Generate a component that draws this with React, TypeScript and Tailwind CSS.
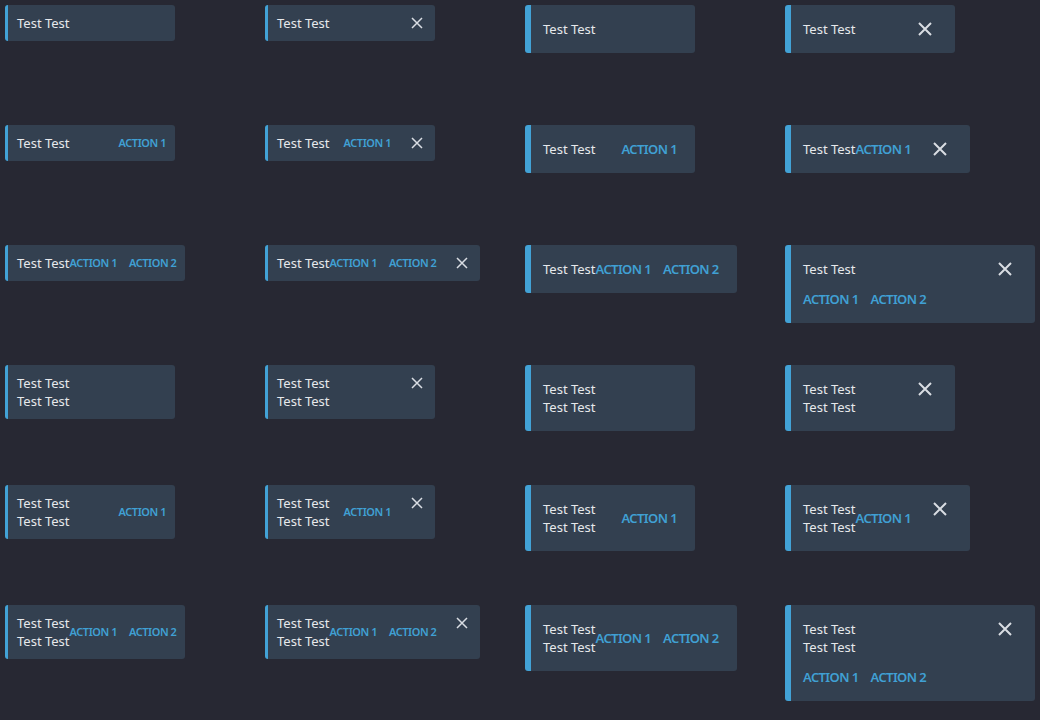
import React from 'react';

type Size = 'sm' | 'lg';

type ToastProps = {
    size: Size;
    lines?: number;
    actions?: number;
    close?: boolean;
    stacked?: boolean;
};

function CloseIcon({ size }: { size: Size }) {
    const px = size === 'sm' ? 12 : 14;
    return (
        <svg width={px} height={px} viewBox={`0 0 ${px} ${px}`} className="text-[#d9dde3]">
            <path
                d={`M1 1L${px - 1} ${px - 1}M${px - 1} 1L1 ${px - 1}`}
                stroke="currentColor"
                strokeWidth={size === 'sm' ? 1.5 : 2}
                fill="none"
            />
        </svg>
    );
}

function Actions({ size, count, className = '' }: { size: Size; count: number; className?: string }) {
    if (count === 0) return null;
    return (
        <div
            className={`flex gap-3 whitespace-nowrap font-semibold uppercase leading-[18px] text-[#40a0d4] ${
                size === 'sm' ? 'text-[11px] tracking-[-0.45px]' : 'text-[13px] tracking-[-0.6px]'
            } ${className}`}
        >
            <span>Action 1</span>
            {count > 1 && <span>Action 2</span>}
        </div>
    );
}

function Toast({ size, lines = 1, actions = 0, close = false, stacked = false }: ToastProps) {
    const sm = size === 'sm';
    const text = (
        <div className="whitespace-nowrap text-[13px] leading-[18px] text-[#e6e8eb]">
            {Array.from({ length: lines }).map((_, i) => (
                <div key={i}>Test Test</div>
            ))}
        </div>
    );

    if (stacked) {
        return (
            <div className="flex w-[250px] rounded-[3px] border-l-[6px] border-[#42a2d6] bg-[#334050]">
                <div className="flex flex-col py-[15px] pl-[12px]">
                    {text}
                    <Actions size={size} count={actions} className="mt-3" />
                </div>
                <div className="ml-auto mr-[23px] flex h-[48px] items-center">
                    <CloseIcon size={size} />
                </div>
            </div>
        );
    }

    return (
        <div
            className={`flex w-fit min-w-[170px] rounded-[3px] bg-[#334050] ${
                sm ? 'border-l-[3px] border-[#42a2d6]' : 'border-l-[6px] border-[#42a2d6]'
            }`}
        >
            <div
                className={`flex flex-1 items-center justify-between ${
                    sm ? 'py-[9px] pl-[9px]' : 'py-[15px] pl-[12px]'
                } ${close ? '' : sm ? 'pr-[9px]' : 'pr-[18px]'}`}
            >
                {text}
                <Actions size={size} count={actions} />
            </div>
            {close && (
                <div
                    className={`flex items-center ${
                        sm ? 'ml-[20px] mr-[12px] h-[36px]' : 'ml-[22px] mr-[23px] h-[48px]'
                    }`}
                >
                    <CloseIcon size={size} />
                </div>
            )}
        </div>
    );
}

const ROWS: { lines: number; actions: number }[] = [
    { lines: 1, actions: 0 },
    { lines: 1, actions: 1 },
    { lines: 1, actions: 2 },
    { lines: 2, actions: 0 },
    { lines: 2, actions: 1 },
    { lines: 2, actions: 2 },
];

export default function App() {
    return (
        <div
            className="min-h-screen w-full bg-[#272833]"
            style={{ fontFamily: '"Noto Sans", "Open Sans", sans-serif' }}
        >
            <div className="grid grid-cols-[repeat(4,260px)] auto-rows-[120px]">
                {ROWS.map((row, i) => (
                    <React.Fragment key={i}>
                        <div className="p-[5px]">
                            <Toast size="sm" lines={row.lines} actions={row.actions} />
                        </div>
                        <div className="p-[5px]">
                            <Toast size="sm" lines={row.lines} actions={row.actions} close />
                        </div>
                        <div className="p-[5px]">
                            <Toast size="lg" lines={row.lines} actions={row.actions} />
                        </div>
                        <div className="p-[5px]">
                            <Toast
                                size="lg"
                                lines={row.lines}
                                actions={row.actions}
                                close
                                stacked={row.actions === 2}
                            />
                        </div>
                    </React.Fragment>
                ))}
            </div>
        </div>
    );
}
